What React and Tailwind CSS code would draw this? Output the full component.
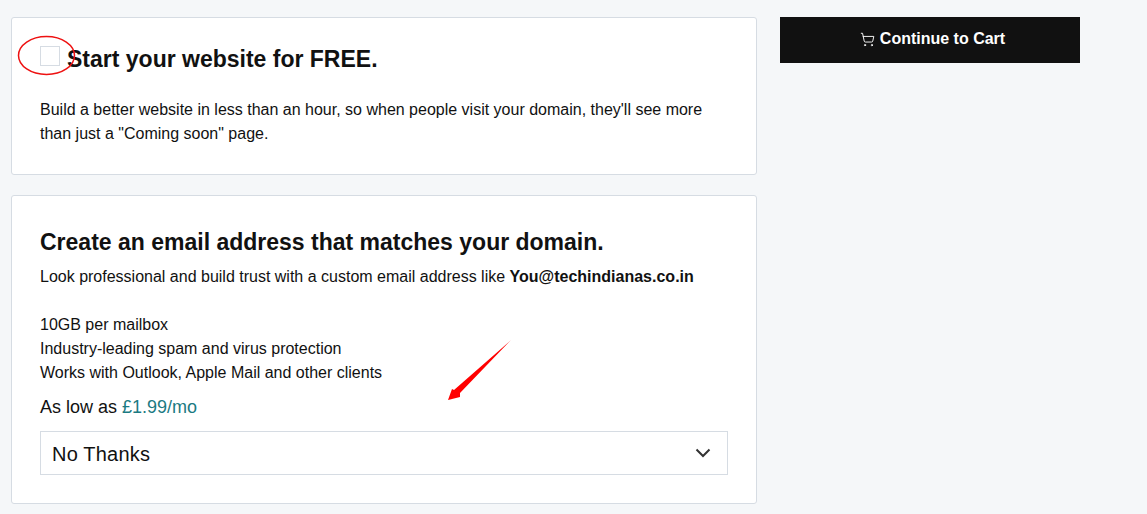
import { ShoppingCart } from 'lucide-react';

function UpsellCard({ className, children }) {
  return (
    <section className={`bg-white border border-[#d6dce3] rounded-[3px] px-[28px] ${className}`}>
      {children}
    </section>
  );
}

function App() {
  return (
    <div className="relative h-[514px] overflow-hidden bg-[#f5f7f9] font-['Liberation_Sans',Arial,sans-serif] text-[#111111]">
      <div className="flex items-start pt-[17px] pl-[11px]">
        <div className="flex flex-col gap-[20px] w-[746px]">
          <UpsellCard className="h-[158px] pt-[28px]">
            <div className="flex items-start h-[28px]">
              <span className="w-[20px] h-[20px] mr-[7px] shrink-0 bg-white border border-[#d6dce3]"></span>
              <h2 className="-mt-[1px] text-[23px] leading-[28px] font-bold">Start your website for FREE.</h2>
            </div>
            <p className="mt-[24px] text-[16px] leading-[24px]">
              Build a better website in less than an hour, so when people visit your domain, they'll see more
              <br />
              than just a "Coming soon" page.
            </p>
          </UpsellCard>

          <UpsellCard className="h-[309px] pt-[32px]">
            <h2 className="text-[23px] leading-[28px] font-bold">Create an email address that matches your domain.</h2>
            <p className="mt-[9px] text-[16px] leading-[24px]">
              Look professional and build trust with a custom email address like <b>You@techindianas.co.in</b>
            </p>
            <ul className="mt-[24px] text-[16px] leading-[24px]">
              <li>10GB per mailbox</li>
              <li>Industry-leading spam and virus protection</li>
              <li>Works with Outlook, Apple Mail and other clients</li>
            </ul>
            <p className="mt-[10px] text-[18px] leading-[24px]">
              As low as <span className="text-[#1b7a82]">£1.99/mo</span>
            </p>
            <div className="mt-[12px] flex items-center justify-between h-[44px] pl-[11px] pr-[15px] border border-[#d6dce3] bg-white">
              <span className="pt-[1px] text-[20px] leading-[28px] tracking-[0.2px]">No Thanks</span>
              <svg width="18" height="18" viewBox="0 0 18 18" fill="none" stroke="#333333" strokeWidth="2">
                <path d="M2.5 5.5 L9 12 L15.5 5.5" />
              </svg>
            </div>
          </UpsellCard>
        </div>

        <button className="ml-[23px] flex items-center justify-center gap-[5px] w-[300px] h-[46px] pb-[2px] pl-[5px] bg-[#111111] text-white text-[16px] font-bold">
          <ShoppingCart size={15} strokeWidth={1.5} />
          Continue to Cart
        </button>
      </div>

      {/* red annotations drawn over the screenshot */}
      <svg className="absolute left-0 top-0 pointer-events-none" width="1147" height="514" fill="none">
        <ellipse cx="46.5" cy="55.5" rx="28" ry="19" stroke="#ee1111" strokeWidth="1.5" />
        <polygon points="511,340 460,393 460,397 448,400 452,389 454,390" fill="#ff0000" />
      </svg>
    </div>
  );
}

export default App;
